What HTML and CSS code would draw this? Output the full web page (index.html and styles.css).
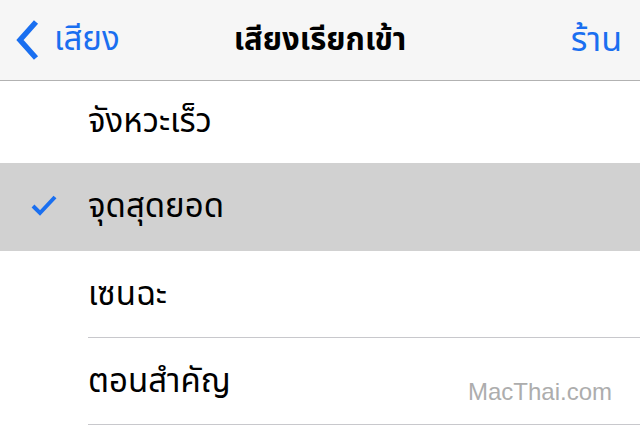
FILE: index.html
```html
<!DOCTYPE html>
<html lang="th">
<head>
<meta charset="utf-8">
<link rel="stylesheet" href="styles.css">
</head>
<body>
<header class="nav">
  <a class="back">
    <svg class="chev" width="26" height="42" viewBox="0 0 26 42"><path d="M21 3 L5 21 L21 39" fill="none" stroke="#1a6ff0" stroke-width="5.5" stroke-linecap="butt" stroke-linejoin="miter"/></svg>
    <span>เสียง</span>
  </a>
  <h1 class="title">เสียงเรียกเข้า</h1>
  <a class="store">ร้าน</a>
</header>
<ul class="list">
  <li class="row first">จังหวะเร็ว</li>
  <li class="row selected">
    <svg class="check" width="28" height="22" viewBox="0 0 28 22"><path d="M3 12 L10 19 L25 3" fill="none" stroke="#1a6ff0" stroke-width="4"/></svg>
    จุดสุดยอด
  </li>
  <li class="row">เซนฉะ</li>
  <li class="row">ตอนสำคัญ<span class="mark">MacThai.com</span></li>
</ul>
</body>
</html>
```
FILE: styles.css
```css
html, body { margin: 0; padding: 0; background: #fff; }
body { width: 640px; height: 427px; overflow: hidden; font-family: "Noto Sans", "Noto Sans Thai", "DejaVu Sans", sans-serif; color: #000; }
.nav { height: 80px; background: #f6f6f6; border-bottom: 1px solid #b2b2b2; display: flex; align-items: center; justify-content: space-between; padding: 0 18px 0 15px; position: relative; }
.back { display: flex; align-items: center; gap: 13px; color: #1a6ff0; font-size: 33px; }
.chev { display: block; }
.title { position: absolute; left: 0; right: 0; text-align: center; margin: 0; font-size: 31px; font-weight: 700; pointer-events: none; }
.store { color: #1a6ff0; font-size: 34px; }
.list { list-style: none; margin: 0; padding: 0; }
.row { height: 87px; display: flex; align-items: center; padding-left: 88px; font-size: 33px; position: relative; }
.row::after { content: ""; position: absolute; left: 88px; right: 0; bottom: 0; height: 1px; background: #c8c8cc; }
.row.first { height: 82px; }
.row.first::after { display: none; }
.row.selected { background: #d1d1d1; height: 88px; }
.row.selected::after { display: none; }
.check { position: absolute; left: 30px; top: 31px; }
.mark { position: absolute; right: 28px; top: 40px; font-family: "Liberation Sans", Arial, sans-serif; font-size: 24px; color: #adadad; }
```
